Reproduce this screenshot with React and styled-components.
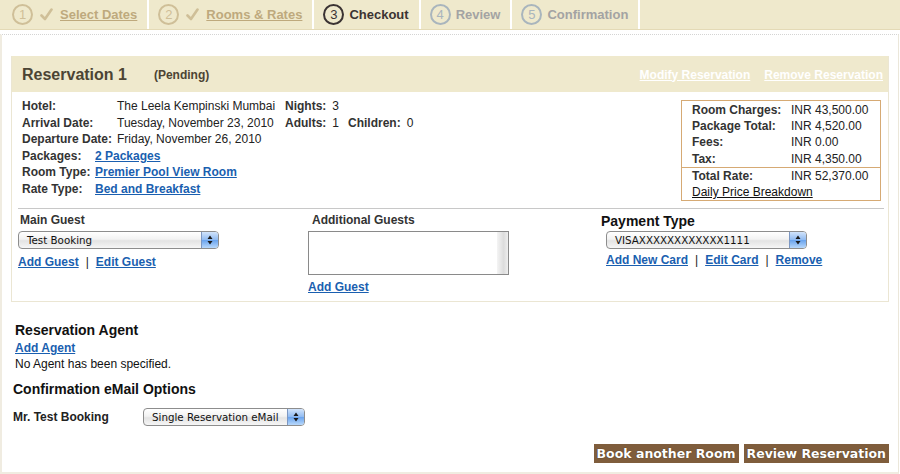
import React from "react";
import styled, { createGlobalStyle } from "styled-components";

const GlobalStyle = createGlobalStyle`
  body {
    margin: 0;
    background: #fff;
    font-family: "Liberation Sans", Arial, sans-serif;
    color: #333;
  }
`;

const Page = styled.div`
  width: 900px;
  height: 474px;
  overflow: hidden;
`;

/* ---------- step bar ---------- */

const Steps = styled.div`
  display: flex;
  height: 29px;
  padding-left: 2px;
  background: #efe9cc;
  border-bottom: 1px solid #e4dab6;
`;

const Step = styled.div`
  display: flex;
  align-items: center;
  gap: ${p => p.$gap}px;
  padding: 0 10px 0 ${p => p.$pl || 9}px;
  border-right: 2px solid #fff;
  font-size: 13px;
  font-weight: bold;
  color: ${p => p.$color};
`;

const StepNum = styled.span`
  width: 17px;
  height: 17px;
  border: 2px solid ${p => p.$ring};
  border-radius: 50%;
  display: flex;
  align-items: center;
  justify-content: center;
  font-size: 13px;
  font-weight: normal;
  color: ${p => p.$ring};
`;

const StepLink = styled.span`
  text-decoration: ${p => (p.$done ? "underline" : "none")};
`;

const Check = ({ color }) => (
  <svg width="13" height="13" viewBox="0 0 13 13">
    <path d="M1.5 7.5 L5 11 L11.5 1.5" fill="none" stroke={color} strokeWidth="2.6" strokeLinecap="round" strokeLinejoin="round" />
  </svg>
);

/* ---------- main panel ---------- */

const Panel = styled.div`
  box-sizing: border-box;
  height: 440px;
  width: 899px;
  margin-top: 4px;
  border-top: 1px dotted #d4d4d4;
  border-left: 2px solid #f0ece1;
  border-right: 1px solid #ebe7da;
  border-bottom: 2px solid #f0ece1;
  padding: 21px 9px 0 9px;
`;

const Box = styled.div`
  border: 1px solid #ebe6d3;
  border-top: none;
`;

const BoxHead = styled.div`
  display: flex;
  align-items: center;
  height: 36px;
  padding: 1px 5px 0 10px;
  box-sizing: border-box;
  background: #efe9cd;
`;

const Title = styled.h2`
  margin: 0;
  font-size: 16px;
  font-weight: bold;
  color: #4c4434;
`;

const Status = styled.span`
  margin-left: 27px;
  font-size: 12px;
  font-weight: bold;
  color: #4c4434;
`;

const HeadLinks = styled.div`
  margin-left: auto;
  display: flex;
  gap: 14px;
`;

const HeadLink = styled.a`
  color: #fff;
  font-size: 12px;
  font-weight: bold;
  text-decoration: underline;
`;

const Details = styled.div`
  display: flex;
  justify-content: space-between;
  align-items: flex-start;
  padding: 6px 7px 0 10px;
`;

const InfoGrid = styled.div`
  display: grid;
  grid-template-columns: ${p => p.$cols};
  font-size: 12px;
  line-height: 16.5px;
  color: #222;
`;

const Label = styled.span`
  font-weight: bold;
  color: #333;
`;

const Value = styled.span`
  white-space: nowrap;
`;

const Extra = styled.span`
  display: inline-flex;
  gap: 6px;
  margin-right: ${p => p.$mr || 0}px;
`;

const Link = styled.a`
  color: #1a5fb0;
  font-weight: bold;
  font-size: 12px;
  text-decoration: underline;
  cursor: pointer;
`;

const PriceBox = styled.div`
  width: 198px;
  margin-top: 2px;
  border: 1px solid #d6aa74;
  font-size: 12px;
  line-height: 16.2px;
  color: #222;
`;

const PriceGroup = styled.div`
  display: grid;
  grid-template-columns: 99px 1fr;
  padding: ${p => p.$pad};
  border-top: ${p => (p.$line ? "1px solid #d6aa74" : "none")};
`;

const Breakdown = styled.a`
  grid-column: 1 / 3;
  color: #111;
  text-decoration: underline;
  line-height: 16px;
`;

const Rule = styled.hr`
  margin: 7px 4px 0 6px;
  border: none;
  border-top: 1px solid #c8c8c8;
`;

const Guests = styled.div`
  display: grid;
  grid-template-columns: 290px 293px 1fr;
  padding: 0 0 6px 6px;
`;

const Col = styled.div`
  display: flex;
  flex-direction: column;
  align-items: flex-start;
`;

const ColLabel = styled.div`
  font-size: ${p => p.$size || 12}px;
  font-weight: bold;
  line-height: 18px;
  margin: ${p => p.$m};
  color: ${p => p.$color || "#333"};
`;

const LinkRow = styled.div`
  display: flex;
  align-items: center;
  gap: 7px;
  margin: ${p => p.$m};
  line-height: 16px;
  font-size: 12px;
  color: #222;
`;

const SelectBox = styled.div`
  box-sizing: border-box;
  display: flex;
  align-items: center;
  width: ${p => p.$w}px;
  height: 18px;
  margin-left: ${p => p.$ml || 0}px;
  border: 1px solid #8d8d8d;
  border-radius: 4px;
  background: linear-gradient(#ffffff, #f2f2f2 45%, #e3e3e3 55%, #f6f6f6);
  font-family: "DejaVu Sans", Verdana, sans-serif;
  font-size: 10.3px;
  color: #111;
  overflow: hidden;
`;

const SelectText = styled.span`
  flex: 1;
  padding-left: 8px;
  white-space: nowrap;
  overflow: hidden;
`;

const SelectArrow = styled.span`
  width: 16px;
  flex-shrink: 0;
  align-self: stretch;
  display: flex;
  align-items: center;
  justify-content: center;
  border-left: 1px solid #7c97c2;
  background: linear-gradient(#d2e4fb, #8fbaf1 50%, #6aa4ee 52%, #b8d8fb);
`;

const Arrows = () => (
  <svg width="6" height="10" viewBox="0 0 6 10">
    <path d="M3 0.5 L5.5 4 L0.5 4 Z M3 9.5 L5.5 6 L0.5 6 Z" fill="#1b1b1b" />
  </svg>
);

const Select = ({ w, ml, children }) => (
  <SelectBox $w={w} $ml={ml}>
    <SelectText>{children}</SelectText>
    <SelectArrow>
      <Arrows />
    </SelectArrow>
  </SelectBox>
);

const ListBox = styled.div`
  box-sizing: border-box;
  display: flex;
  justify-content: flex-end;
  width: 201px;
  height: 44px;
  border: 1px solid #8a8a8a;
  background: #fff;
`;

const ScrollTrack = styled.span`
  width: 11px;
  background: linear-gradient(90deg, #f4f4f4, #dcdcdc 60%, #eeeeee);
`;

/* ---------- below the box ---------- */

const Section = styled.div`
  padding-left: ${p => p.$pl}px;
  margin-top: ${p => p.$mt}px;
`;

const SectionTitle = styled.h3`
  margin: 0 0 2px;
  font-size: 14px;
  font-weight: bold;
  line-height: 16px;
  color: #111;
`;

const Note = styled.div`
  font-size: 12px;
  line-height: 16px;
  color: #111;
`;

const EmailRow = styled.div`
  display: flex;
  align-items: center;
  margin-top: 11px;
  height: 18px;
`;

const GuestName = styled.span`
  width: 130px;
  font-size: 12px;
  font-weight: bold;
  color: #222;
`;

const Actions = styled.div`
  display: flex;
  justify-content: flex-end;
  gap: 5px;
  margin-top: 18px;
`;

const Button = styled.button`
  height: 19px;
  padding: 0 3px;
  border: none;
  background: #7f5d3c;
  color: #fff;
  font-family: "DejaVu Sans", Verdana, sans-serif;
  font-size: 12.5px;
  font-weight: bold;
  line-height: 19px;
  text-shadow: 0 0 1px #3a2612;
  cursor: pointer;
`;

const steps = [
  { n: 1, label: "Select Dates", state: "done" },
  { n: 2, label: "Rooms & Rates", state: "done" },
  { n: 3, label: "Checkout", state: "current" },
  { n: 4, label: "Review", state: "todo" },
  { n: 5, label: "Confirmation", state: "todo" },
];

const stepColors = {
  done: { text: "#bea97d", ring: "#cfbf98" },
  current: { text: "#3b3333", ring: "#3b3333" },
  todo: { text: "#a3a3a3", ring: "#a9b5bd" },
};

export default function App() {
  return (
    <Page>
      <GlobalStyle />
      <Steps>
        {steps.map((s, i) => {
          const c = stepColors[s.state];
          const done = s.state === "done";
          return (
            <Step key={s.n} $color={c.text} $pl={i === 0 ? 10 : 9} $gap={done ? 7 : 5}>
              <StepNum $ring={c.ring}>{s.n}</StepNum>
              {done && <Check color={c.ring} />}
              <StepLink $done={done}>{s.label}</StepLink>
            </Step>
          );
        })}
      </Steps>

      <Panel>
        <Box>
          <BoxHead>
            <Title>Reservation 1</Title>
            <Status>(Pending)</Status>
            <HeadLinks>
              <HeadLink>Modify Reservation</HeadLink>
              <HeadLink>Remove Reservation</HeadLink>
            </HeadLinks>
          </BoxHead>

          <Details>
            <div>
              <InfoGrid $cols="95px 168px auto">
                <Label>Hotel:</Label>
                <Value>The Leela Kempinski Mumbai</Value>
                <Value>
                  <Extra><Label>Nights:</Label> 3</Extra>
                </Value>
                <Label>Arrival Date:</Label>
                <Value>Tuesday, November 23, 2010</Value>
                <Value>
                  <Extra $mr={9}><Label>Adults:</Label> 1</Extra>
                  <Extra><Label>Children:</Label> 0</Extra>
                </Value>
                <Label>Departure Date:</Label>
                <Value>Friday, November 26, 2010</Value>
                <span />
              </InfoGrid>
              <InfoGrid $cols="73px auto">
                <Label>Packages:</Label>
                <Value><Link>2 Packages</Link></Value>
                <Label>Room Type:</Label>
                <Value><Link>Premier Pool View Room</Link></Value>
                <Label>Rate Type:</Label>
                <Value><Link>Bed and Breakfast</Link></Value>
              </InfoGrid>
            </div>

            <PriceBox>
              <PriceGroup $pad="1px 0 0 10px">
                <Label>Room Charges:</Label>
                <Value>INR 43,500.00</Value>
                <Label>Package Total:</Label>
                <Value>INR 4,520.00</Value>
                <Label>Fees:</Label>
                <Value>INR 0.00</Value>
                <Label>Tax:</Label>
                <Value>INR 4,350.00</Value>
              </PriceGroup>
              <PriceGroup $pad="0 0 0 10px" $line>
                <Label>Total Rate:</Label>
                <Value>INR 52,370.00</Value>
                <Breakdown>Daily Price Breakdown</Breakdown>
              </PriceGroup>
            </PriceBox>
          </Details>

          <Rule />

          <Guests>
            <Col>
              <ColLabel $m="2px 0 2px 2px">Main Guest</ColLabel>
              <Select w={201}>Test Booking</Select>
              <LinkRow $m="5px 0 0 0">
                <Link>Add Guest</Link>|<Link>Edit Guest</Link>
              </LinkRow>
            </Col>
            <Col>
              <ColLabel $m="2px 0 2px 4px">Additional Guests</ColLabel>
              <ListBox>
                <ScrollTrack />
              </ListBox>
              <LinkRow $m="4px 0 0 0">
                <Link>Add Guest</Link>
              </LinkRow>
            </Col>
            <Col>
              <ColLabel $size={14} $color="#111" $m="3px 0 1px 0">Payment Type</ColLabel>
              <Select w={201} ml={5}>VISAXXXXXXXXXXXX1111</Select>
              <LinkRow $m="3px 0 0 5px">
                <Link>Add New Card</Link>|<Link>Edit Card</Link>|<Link>Remove</Link>
              </LinkRow>
            </Col>
          </Guests>
        </Box>

        <Section $pl={4} $mt={20}>
          <SectionTitle>Reservation Agent</SectionTitle>
          <Note><Link>Add Agent</Link></Note>
          <Note>No Agent has been specified.</Note>
        </Section>

        <Section $pl={2} $mt={9}>
          <SectionTitle>Confirmation eMail Options</SectionTitle>
          <EmailRow>
            <GuestName>Mr. Test Booking</GuestName>
            <Select w={162}>Single Reservation eMail</Select>
          </EmailRow>
        </Section>

        <Actions>
          <Button>Book another Room</Button>
          <Button>Review Reservation</Button>
        </Actions>
      </Panel>
    </Page>
  );
}
